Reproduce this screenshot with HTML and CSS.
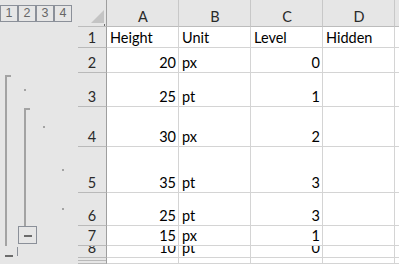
FILE: index.html
```html
<html>
<head>
<title>Sheet1 || Outline</title>
<link rel="stylesheet" href="styles.css">
</head>

<body>
	<div class="sheet">
		<!-- outline gutter for grouped rows -->
		<div class="outline">
			<svg width="78" height="237" viewBox="0 27 78 237">
				<rect class="bar" x="5" y="75" width="2" height="171"/>
				<rect class="bar" x="5" y="75" width="6" height="2"/>
				<rect class="bar" x="24" y="108" width="2" height="118"/>
				<rect class="bar" x="24" y="108" width="6" height="2"/>
				<rect class="bar" x="24" y="89" width="2" height="2"/>
				<rect class="bar" x="43" y="126" width="2" height="2"/>
				<rect class="bar" x="62" y="169" width="2" height="2"/>
				<rect class="bar" x="62" y="208" width="2" height="2"/>
				<rect class="box" x="18.5" y="226.5" width="18" height="17"/>
				<rect class="minus" x="24" y="235" width="8" height="2"/>
				<rect class="minus" x="5" y="255" width="8" height="2"/>
				<rect class="edge" x="17" y="247" width="1" height="9"/>
			</svg>
		</div>

		<div class="levels">
			<span class="lvl">1</span>
			<span class="lvl">2</span>
			<span class="lvl">3</span>
			<span class="lvl">4</span>
		</div>
		<div class="corner">
			<svg width="28" height="26"><polygon points="13,23 26,23 26,10" fill="#c4c4c4"/><rect x="26" y="24" width="1" height="2" fill="#6f6f6f"/></svg>
		</div>
		<div class="ch">A</div>
		<div class="ch">B</div>
		<div class="ch">C</div>
		<div class="ch">D</div>
		<div class="ch"></div>

		<div class="rh">1</div>
		<div class="c">Height</div>
		<div class="c">Unit</div>
		<div class="c">Level</div>
		<div class="c">Hidden</div>
		<div class="c"></div>

		<div class="rh">2</div>
		<div class="c num">20</div>
		<div class="c">px</div>
		<div class="c num">0</div>
		<div class="c"></div>
		<div class="c"></div>

		<div class="rh">3</div>
		<div class="c num">25</div>
		<div class="c">pt</div>
		<div class="c num">1</div>
		<div class="c"></div>
		<div class="c"></div>

		<div class="rh">4</div>
		<div class="c num">30</div>
		<div class="c">px</div>
		<div class="c num">2</div>
		<div class="c"></div>
		<div class="c"></div>

		<div class="rh">5</div>
		<div class="c num">35</div>
		<div class="c">pt</div>
		<div class="c num">3</div>
		<div class="c"></div>
		<div class="c"></div>

		<div class="rh">6</div>
		<div class="c num">25</div>
		<div class="c">pt</div>
		<div class="c num">3</div>
		<div class="c"></div>
		<div class="c"></div>

		<div class="rh">7</div>
		<div class="c num">15</div>
		<div class="c">px</div>
		<div class="c num">1</div>
		<div class="c"></div>
		<div class="c"></div>

		<div class="rh">8</div>
		<div class="c num">10</div>
		<div class="c">pt</div>
		<div class="c num">0</div>
		<div class="c"></div>
		<div class="c"></div>

		<div class="rh"></div>
		<div class="c"></div>
		<div class="c"></div>
		<div class="c"></div>
		<div class="c"></div>
		<div class="c"></div>

		<div class="rh"></div>
		<div class="c"></div>
		<div class="c"></div>
		<div class="c"></div>
		<div class="c"></div>
		<div class="c"></div>
	</div>
</body>
</html>
```

FILE: styles.css
```css
body {
	margin: 0px;
	background: #e6e6e6;
}

.sheet {
	width: 399px;
	height: 264px;
	overflow: hidden;
	display: grid;
	grid-template-columns: 78px 29px 72px 72px 72px 72px 1fr;
	grid-template-rows: 27px 21px 25px 34px 40px 46px 33px 20px 12px 2px 1fr;
	font-family: Lato, "Liberation Sans", sans-serif;
	font-size: 14.5px;
	line-height: 15px;
}

.outline {
	grid-column: 1;
	grid-row: 2 / -1;
	overflow: hidden;
}
.outline svg {
	display: block;
}
.bar {
	fill: #a3a3a3;
}
.box {
	fill: #e6e6e6;
	stroke: #8b9099;
	stroke-width: 1;
}
.minus {
	fill: #6b6b6b;
}
.edge {
	fill: #8b9099;
}

.levels {
	grid-column: 1;
	grid-row: 1;
	display: flex;
	align-items: flex-start;
	padding-top: 5px;
}
.lvl {
	box-sizing: border-box;
	width: 18px;
	height: 17px;
	border: 1px solid #8b9099;
	display: flex;
	align-items: center;
	justify-content: center;
	font-family: "Liberation Sans", sans-serif;
	font-size: 12.5px;
	color: #666666;
}

.corner {
	border-right: 1px solid #9e9e9e;
	border-bottom: 1px solid #bcbcbc;
}
.corner svg {
	display: block;
}

.ch, .rh, .c {
	box-sizing: border-box;
	display: flex;
	align-items: flex-end;
	overflow: hidden;
	white-space: nowrap;
	padding: 0 2px 2px 3px;
}

.ch {
	justify-content: center;
	color: #2a2a2a;
	border-right: 1px solid #c8c8c8;
	border-bottom: 1px solid #bcbcbc;
}

.rh {
	justify-content: center;
	color: #2a2a2a;
	border-right: 1px solid #9e9e9e;
	border-bottom: 1px solid #b9b9b9;
	padding: 0 0 2px 0;
}

.c {
	background: white;
	color: black;
	border-right: 1px solid #d4d4d4;
	border-bottom: 1px solid #d4d4d4;
}

.num {
	justify-content: flex-end;
}
```
